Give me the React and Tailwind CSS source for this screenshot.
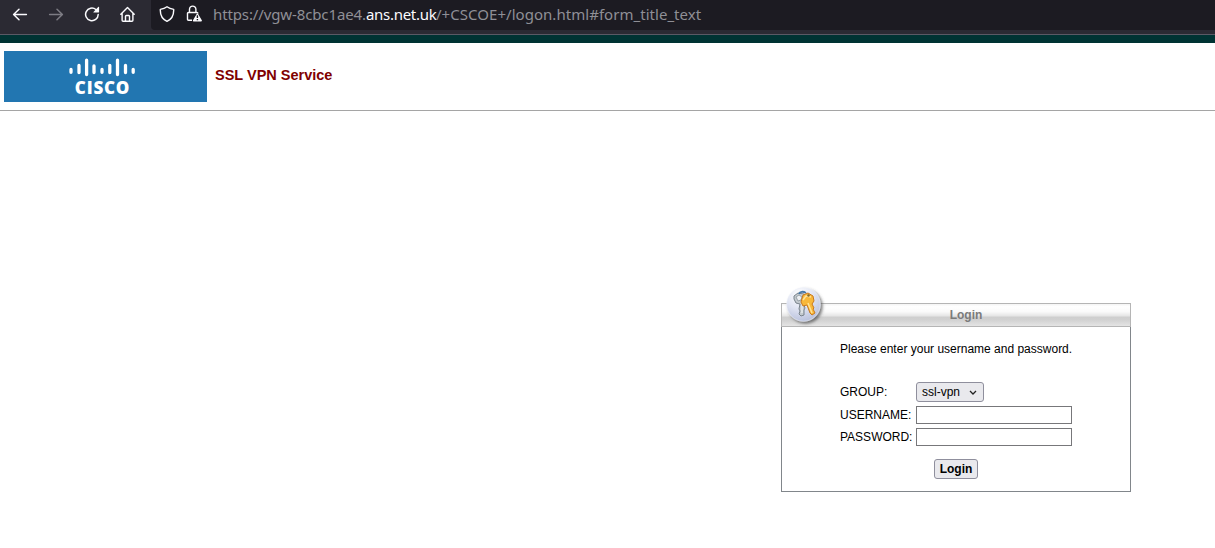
import React from "react";

function BackIcon() {
  return (
    <svg width="16" height="16" viewBox="0 0 16 16" fill="none" stroke="#fbfbfe" strokeWidth="1.5" strokeLinecap="round" strokeLinejoin="round">
      <path d="M14.4 8.5H1.8M7 3.200 1.6 8.5 7 13.8" />
    </svg>
  );
}

function ForwardIcon() {
  return (
    <svg width="16" height="16" viewBox="0 0 16 16" fill="none" stroke="#7d7c84" strokeWidth="1.5" strokeLinecap="round" strokeLinejoin="round">
      <path d="M1.6 8.5h12.6M9 3.200l5.4 5.3L9 13.8" />
    </svg>
  );
}

function ReloadIcon() {
  return (
    <svg width="16" height="16" viewBox="0 0 16 16" fill="none" stroke="#fbfbfe" strokeWidth="1.5" strokeLinecap="round">
      <path d="M14.200 8.500A6.300 6.300 0 1 1 11.900 3.500" />
      <path d="M14.400.8c.3-.3.700 0 .7.300v5c0 .3-.2.500-.5.500h-4.800c-.4 0-.6-.4-.3-.7z" fill="#fbfbfe" stroke="none" />
    </svg>
  );
}

function HomeIcon() {
  return (
    <svg width="16" height="16" viewBox="0 0 16 16" fill="none" stroke="#fbfbfe" strokeWidth="1.4" strokeLinecap="round" strokeLinejoin="round">
      <path d="M.800 8.300 7.500 1.600 14.200 8.300M2.100 7.300v6.900c0 .6.4 1 1 1h8.800c.6 0 1-.4 1-1V7.300" />
      <path d="M5.500 15v-4.700c0-.5.3-.8.8-.8h2.400c.5 0 .8.3.8.8V15" />
    </svg>
  );
}

function ShieldIcon() {
  return (
    <svg width="16" height="16" viewBox="0 0 16 16" fill="none" stroke="#fbfbfe" strokeWidth="1.4" strokeLinejoin="round">
      <path d="M8 .8c2 1.500 4.200 2.200 6.700 2.600C14.900 9.200 12.700 13.200 8 15.300 3.300 13.200 1.100 9.200 1.300 3.400 3.800 3 6 2.300 8 .8Z" />
    </svg>
  );
}

function LockWarningIcon() {
  return (
    <svg width="17" height="17" viewBox="0 0 17 17" fill="none" stroke="#fbfbfe" strokeWidth="1.4" strokeLinejoin="round">
      <path d="M4.500 7.500V4.300a3.200 3.200 0 0 1 6.400 0v3.200" />
      <path d="M7 15.300H3.500c-.6 0-1-.4-1-1V8.500c0-.6.4-1 1-1h8.400c.6 0 1 .4 1 1" />
      <path d="M12.400 9 16.200 15.700H8.600z" fill="#fbfbfe" />
      <path d="M12.400 10.300v2.700M12.400 14v1.300" stroke="#1c1b22" strokeWidth="1.400" />
    </svg>
  );
}

function CiscoMark() {
  return (
    <svg className="shrink-0" width="68" height="22" viewBox="0 0 68 22" fill="none" stroke="#fff" strokeWidth="3.300" strokeLinecap="round">
      <path d="M3 12.500v2.800M11 8.500v7M18.600 3.200V17.500M26 9v6.500M34 12.500v2.800M41.800 8.500v7M49.500 3.200V17.500M57.500 8.500v7M65.200 12.500v2.800" />
    </svg>
  );
}

function KeysBadge() {
  return (
    <svg className="absolute -top-[18px] left-[2px]" width="44" height="44" viewBox="0 0 44 44">
      <defs>
        <radialGradient id="badge" cx="38%" cy="20%" r="82%">
          <stop offset="0" stopColor="#fff" />
          <stop offset=".5" stopColor="#e1e5f3" />
          <stop offset="1" stopColor="#b9c1dc" />
        </radialGradient>
        <filter id="shade" x="-30%" y="-30%" width="170%" height="170%">
          <feDropShadow dx="2" dy="2" stdDeviation="1.500" floodColor="#444" floodOpacity=".7" />
        </filter>
      </defs>
      <circle cx="19.500" cy="18.500" r="16.800" fill="url(#badge)" stroke="#edf0f8" strokeWidth=".6" filter="url(#shade)" />
      <g strokeLinejoin="round">
        <path d="m10 10 4-3 6 1 2 3-1 5-1 3 1 3-1 2v5l-3 1-2-2 1-3-1-2 1-5-4-1-2-4Z" fill="#c4cacf" stroke="#79838c" />
        <path d="m12 11 3-2 3 2-1 3-3 1Z" fill="#eceef1" stroke="#7e8992" strokeWidth=".7" />
        <path d="M18 15v12" stroke="#eef1f3" strokeWidth="1.200" />
        <path d="M15 8c1-2.500 4-3 7-1" fill="none" stroke="#4778a8" strokeWidth="1.800" />
        <path d="m19 9 5-2 5 3 1 5-2 3 1 2 1 2-1 1 1 2 1 2-3 2-2-2-3-8-4 1-2-4Z" fill="#f8b83a" stroke="#c9791c" />
        <path d="m19 14 3-4 5 1M24 17l4 10" fill="none" stroke="#ffe397" strokeWidth="1.500" />
        <circle cx="24.500" cy="9.500" r="1.200" fill="#80682e" />
      </g>
    </svg>
  );
}

function Toolbar() {
  return (
    <nav className="flex h-[35px] border-b border-[#5b5965] bg-[#2b2a33]">
      <div className="flex h-[30px] w-[151px] shrink-0 items-center gap-5 pb-[3px] pl-3">
        <BackIcon />
        <ForwardIcon />
        <ReloadIcon />
        <HomeIcon />
      </div>
      <div className="flex h-[30px] flex-1 items-center rounded-bl bg-[#1c1b22] pb-[3px] pl-2">
        <ShieldIcon />
        <div className="ml-2.5 w-[28px]"><LockWarningIcon /></div>
        <div className="flex whitespace-pre font-['Noto_Sans',sans-serif] text-[15px] leading-5 text-[#8f8f96]">
          <span className="w-[153px] tracking-[-0.12px]">https://vgw-8cbc1ae4.</span>
          <span className="w-[70px] tracking-[-0.3px] text-[#fbfbfe]">ans.net.uk</span>
          <span className="tracking-[0.04px]">/+CSCOE+/logon.html#form_title_text</span>
        </div>
      </div>
    </nav>
  );
}

function LoginPanel() {
  return (
    <section className="relative ml-[781px] mt-[192px] h-[189px] w-[350px] border border-[#81868b] text-xs text-black">
      <h2 className="-mx-px -mt-px h-6 border border-[#b5b5b5] bg-[linear-gradient(#f4f4f4_0%,#ffffff_12%,#fafafa_35%,#e4e4e4_55%,#cecece_59%,#d0d0d0_70%,#e4e4e4_100%)] pl-5 text-center font-bold leading-[22px] text-[#7b7b7b]">Login</h2>
      <KeysBadge />
      <form className="ml-[58px] w-[232px]">
        <p className="mt-[14px] whitespace-nowrap leading-4">Please enter your username and password.</p>
        <div className="mt-[25px] grid grid-cols-[76px_156px] items-center gap-y-1">
          <span>GROUP:</span>
          <button type="button" className="flex h-5 w-[68px] items-center justify-between rounded-[3px] border border-[#8f8f9d] bg-[#e9e9ed] pl-[5px] pr-1.5">
            ssl-vpn
            <svg className="mt-px" width="8" height="6" viewBox="0 0 8 6" fill="none" stroke="#222" strokeWidth="1.300"><path d="m1 1 3 3 3-3" /></svg>
          </button>
          <label htmlFor="user">USERNAME:</label>
          <input id="user" className="h-[18px] border border-[#77777a] bg-white px-1 outline-none" />
          <label htmlFor="pass">PASSWORD:</label>
          <input id="pass" type="password" className="h-[18px] border border-[#77777a] bg-white px-1 outline-none" />
        </div>
        <button type="button" className="mx-auto mt-[13px] flex h-5 w-11 items-center justify-center rounded-[3px] border border-[#8f8f9d] bg-[#e9e9ed] font-bold">Login</button>
      </form>
    </section>
  );
}

export default function App() {
  return (
    <div className="h-[548px] w-[1215px] overflow-hidden bg-white font-['Liberation_Sans',Arial,sans-serif]">
      <Toolbar />
      <div className="h-2 bg-[#003333]" />
      <header className="flex h-[68px] border-b border-[#a5a5a5] pl-1 pt-2">
        <div className="flex h-[51px] w-[203px] flex-col items-center bg-[#2276b1] pr-2 pt-1.5 text-white">
          <CiscoMark />
          <span className="mt-px pl-0.5 font-['Open_Sans',sans-serif] text-[17px] font-extrabold leading-[15px] tracking-[0.8px]">CISCO</span>
        </div>
        <h1 className="ml-2 mt-[14px] text-[14.5px] font-bold leading-5 text-[#800000]">SSL VPN Service</h1>
      </header>
      <LoginPanel />
    </div>
  );
}
